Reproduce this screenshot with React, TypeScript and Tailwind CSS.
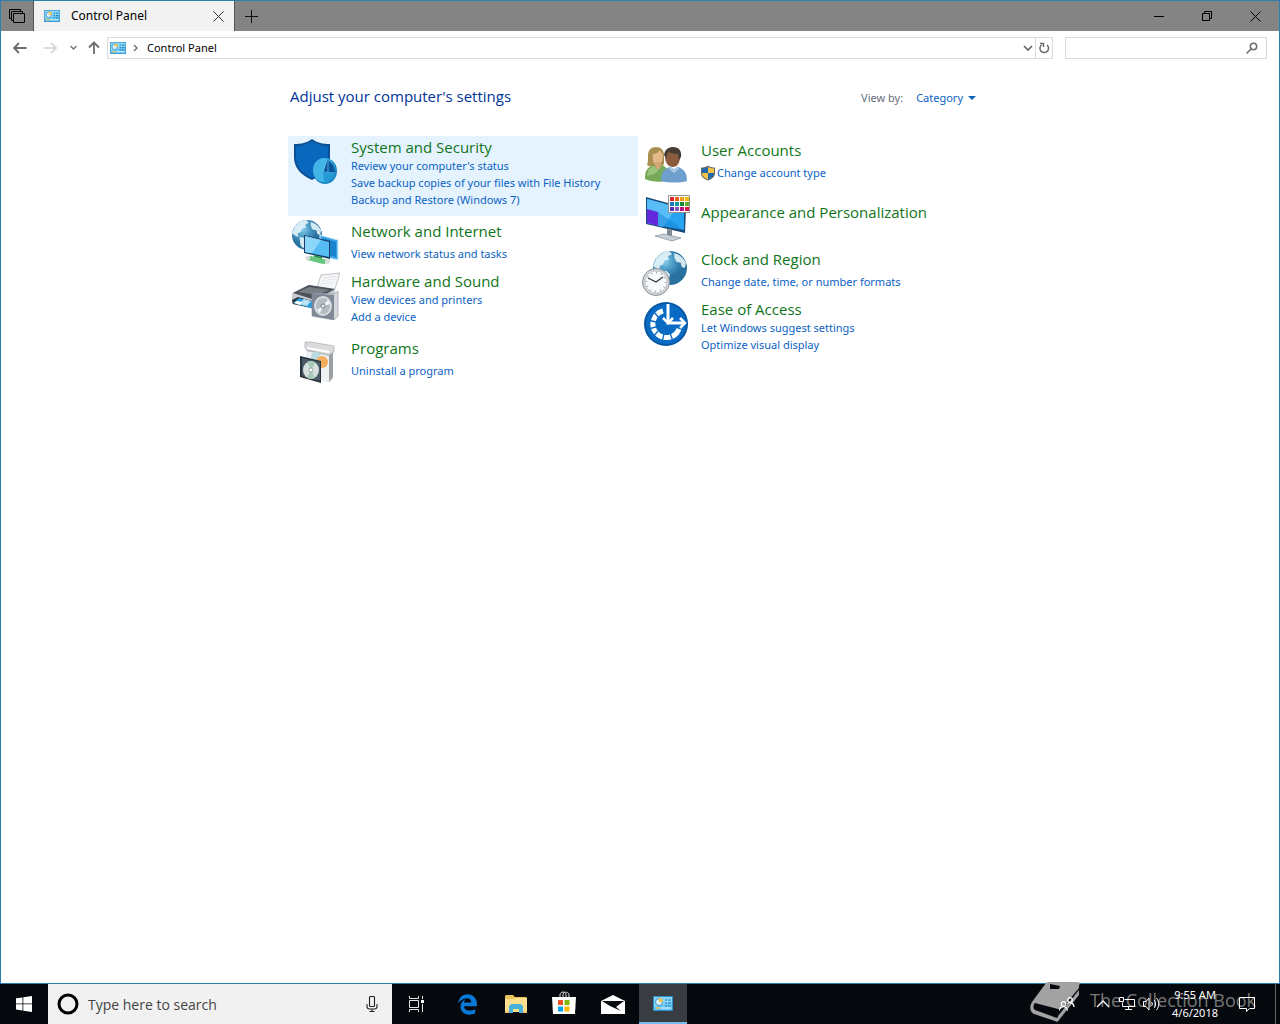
import type { ReactNode } from "react";
import { FaEdgeLegacy } from "react-icons/fa6";

const ControlPanelIcon = ({ className }: { className?: string }) => (
  <svg className={className} viewBox="0 0 20 15" aria-hidden="true">
    <rect x="0.5" y="0.5" width="19" height="14" fill="#6ac6f3" stroke="#2b8fcb" />
    <path d="M1 1h18v5L1 11z" fill="#8ad6f8" />
    <circle cx="6" cy="6" r="3.500" fill="#d9f1fc" stroke="#3285b8" strokeWidth="0.9" />
    <path d="M6 6V2a4 4 0 0 1 4 4z" fill="#f3c14a" />
    <path d="M12 4h2M15 4h3M12 7h2M15 7h3M12 10h2M15 10h3" stroke="#1a79bb" strokeWidth="1.2" />
    <path d="M3 12h4" stroke="#f3c14a" strokeWidth="1.5" />
    <path d="M8 12h10" stroke="#e7f7ff" />
  </svg>
);

const Globe = ({ cx, cy, r }: { cx: number; cy: number; r: number }) => (
  <g transform={`translate(${cx} ${cy}) scale(${r / 16})`}>
    <circle r="16" fill="url(#globe)" />
    <path d="M-13-9c3-4 8-7 12-7l3 3-4 2 1 3-4 1-2 4-3 1 1 4-3-1-4-3zM-8 2l5 1 3 3-1 4-3 4-3-3zM4-14c5 1 9 5 11 9l-1 5-3-1-1-4-4-1-2-4z" fill="#e6f4fa" opacity="0.9" />
  </g>
);

const SecurityIcon = () => (
  <>
    <path d="M20 1c5 4 11 5 18 5v13c0 11-7 18-18 23C9 37 2 30 2 19V6c7 0 13-1 18-5z" fill="#0a4f94" />
    <path d="M20 3c5 3 10 5 16 5v11c0 10-6 16-16 21C10 35 4 29 4 19V8c6 0 11-2 16-5z" fill="#0968bd" />
    <ellipse cx="33" cy="33" rx="12" ry="13" fill="#1b86c6" />
    <ellipse cx="32" cy="32" rx="11" ry="12" fill="#42b4e6" />
    <path d="M31 34l4-12c5 2 8 6 8 13z" fill="#0b559c" />
    <path d="M31 34l4-12M36 35V23M31 34l12 1" stroke="#6fd0f5" strokeWidth="0.7" />
    <path d="M31 34l12 1c-1 6-5 9-11 9z" fill="#2499d3" />
  </>
);

const NetworkIcon = () => (
  <>
    <Globe cx={15} cy={17} r={15} />
    <path d="M28 17l18 5v20l-18-4z" fill="#3aa6e8" stroke="#d9eefa" />
    <path d="M31 20l13 4v15l-13-3z" fill="#1883cf" />
    <path d="M12 17l26 6v18l-26-6z" fill="#183e63" />
    <path d="M13 18l24 6v15l-24-5z" fill="#56bdf4" />
    <path d="M13 18l16 4-9 13-7-1z" fill="#8bd7fb" />
    <path d="M22 37l8 2v4h-8z" fill="#25934a" />
    <path d="M14 39l5-1 17 4v3l-5 1-16-4z" fill="#68c77e" />
    <path d="M13 39l5-1v4l-4-1zM33 42l5-1v4l-5 1z" fill="#d8dcda" />
  </>
);

const HardwareIcon = () => (
  <>
    <path d="M29 3l19-2-6 19-18-2z" fill="#f4f5f6" stroke="#a9adb2" strokeWidth="0.7" />
    <path d="M31 6l13-2M30 9l13-2M29 12l12-1" stroke="#dfe3e7" strokeWidth="0.7" />
    <path d="M0 21l16-8 27 4v14l-22 6-21-5z" fill="#c7ccd2" />
    <path d="M1 21l16-8 26 4-20 11z" fill="#4b5157" />
    <path d="M6 20l11-5 21 3-13 5z" fill="#787e85" />
    <path d="M0 28l6-3 18 5-3 6-20-4z" fill="#2b3137" />
    <path d="M1 31l6-5 16 4-4 6z" fill="#2a9cdd" />
    <path d="M7 32l5-5 7 2-4 5z" fill="#b9e3f4" />
    <path d="M2 31l3-2 5 1-2 3z" fill="#fff" />
    <path d="M20 21l22 1 4-3v25l-4 4-22-4z" fill="#d5d9de" stroke="#8b929a" strokeWidth="0.6" />
    <path d="M20 21l22 2v25l-22-4z" fill="#7f8995" />
    <ellipse cx="31" cy="34" rx="9" ry="10" fill="#d9dde1" />
    <ellipse cx="31" cy="34" rx="7" ry="8" fill="#b4bcc4" />
    <path d="M31 34l5-6 2 4zM31 34l-6 4 3 3z" fill="#f5f6f7" />
    <ellipse cx="31" cy="34" rx="2" ry="2" fill="#eef1f3" stroke="#606c78" strokeWidth="0.8" />
  </>
);

const ProgramsIcon = () => (
  <>
    <path d="M14 12l4-9 23 5v31l-4 4-23-6z" fill="#bfc2c5" />
    <path d="M14 12l23 5v26l-23-6z" fill="#f0f1f2" />
    <path d="M37 17l4-5v26l-4 5z" fill="#9ba0a4" />
    <path d="M13 3h6l23 4v6l-5 3-22-5-2-2z" fill="#d9dbdd" stroke="#a6aaad" strokeWidth="0.7" />
    <path d="M15 9l22 4" stroke="#fff" strokeWidth="2" />
    <circle cx="24" cy="18" r="5" fill="#b9dbe1" />
    <circle cx="30" cy="23" r="6" fill="#f3ad5c" />
    <path d="M8 17l21 5v22l-21-6z" fill="#26323e" />
    <path d="M10 19l18 4v19l-18-5z" fill="#4b5a65" />
    <ellipse cx="19" cy="31" rx="8" ry="9" fill="#d8e0df" />
    <path d="M19 31l-4-8c3-2 6-1 8 1zM19 31l4 8c-3 2-6 1-8-1z" fill="#a7cbb9" />
    <ellipse cx="19" cy="31" rx="2" ry="2" fill="#fff" stroke="#7b8b91" strokeWidth="0.7" />
  </>
);

const UsersIcon = () => (
  <>
    <path d="M6 16c0-6 3-9 8-9 5 0 8 3 8 8v9c-3 4-13 4-17 1 1-3 1-5 1-9z" fill="#a9904f" />
    <path d="M11 14c3 0 6-2 7-4l3 5c0 6-2 9-6 10-4-1-5-6-4-11z" fill="#e3b98c" />
    <path d="M13 22h6v5l-3 3-3-3z" fill="#d5a678" />
    <path d="M3 39c0-8 2-12 9-14l4 5 4-5c5 2 7 6 7 15-8 3-17 2-24-1z" fill="#78a957" />
    <path d="M5 36c1-6 3-9 7-10l4 5-4 3z" fill="#9bc47b" />
    <path d="M23 17c0-6 3-9 8-9s8 4 7 9c0 6-3 10-7 10-5 0-8-5-8-10z" fill="#8b5b3d" />
    <path d="M22 15c1-6 5-8 9-8 6 0 9 4 8 10l-2 3-1-6c-5 0-7-1-10-2l-2 6z" fill="#463c34" />
    <path d="M19 41c0-8 2-12 9-14l4 4 4-4c6 2 9 6 9 14-7 2-18 2-26 0z" fill="#6e9fcd" />
    <path d="M28 26l4 3 4-3 1 3-5 4-5-4z" fill="#a7c9e8" />
  </>
);

const swatches = ["#e0262d", "#e5601b", "#f39b13", "#efb700", "#147ac2", "#0899a5", "#118a36", "#5daa24", "#5431b5", "#8556b8", "#b91582", "#dd1443"];

const AppearanceIcon = () => (
  <>
    <path d="M4 3l40 11-1 25-39-9z" fill="#174a76" />
    <path d="M5 5l37 10v21L5 29z" fill="#27a4f0" />
    <path d="M5 5l30 8-14 20-16-4z" fill="#58bdf7" />
    <path d="M5 15l11 3v14L5 29z" fill="#6329df" />
    <path d="M16 18l26 18-26-4z" fill="#1685d8" opacity="0.5" />
    <path d="M25 35l5 1v6h-5z" fill="#7e8a94" />
    <path d="M13 42l9-2 17 4-9 3z" fill="#c7d0d7" stroke="#73818c" strokeWidth="0.6" />
    <path d="M26.500 1.500h21v17h-21z" fill="#fff" stroke="#929292" />
    {swatches.map((color, i) => (
      <rect key={color} x={28 + (i % 4) * 5} y={3 + Math.floor(i / 4) * 5} width="4" height="4" fill={color} />
    ))}
  </>
);

const ClockIcon = () => (
  <>
    <Globe cx={28} cy={19} r={17} />
    <circle cx="14" cy="33" r="13.500" fill="#cfd4d8" stroke="#8b9298" />
    <circle cx="14" cy="33" r="11" fill="#f9fafb" stroke="#b7bdc2" strokeWidth="0.700" />
    <circle cx="14" cy="33" r="9.500" fill="none" stroke="#70777c" strokeWidth="1.500" strokeDasharray="0.7 4.274" />
    <path d="M6 29l8 4 7-5" fill="none" stroke="#33383c" strokeWidth="1.300" />
  </>
);

const EaseIcon = () => (
  <>
    <circle cx="24" cy="24" r="22" fill="#0757a4" />
    <circle cx="24" cy="24" r="20" fill="#0a6bc4" />
    <path d="M21 11A13.500 13.500 0 1 0 37 29" fill="none" stroke="#fff" strokeWidth="5" />
    <path d="M12 12l5 6M6 20l8 2M6 29l8-2M11 37l5-6M20 42l2-8M31 41l-3-8" stroke="#0a6bc4" strokeWidth="1.300" />
    <path d="M26 4v19h17" fill="none" stroke="#fff" strokeWidth="3" />
    <path d="M21 18l5 5 5-5M38 18l5 5-5 5" fill="none" stroke="#fff" strokeWidth="2.500" />
  </>
);

const UacShield = () => (
  <svg className="-ml-px mr-px size-4 shrink-0" viewBox="0 0 16 16" aria-hidden="true">
    <path d="M8 0.500c2 1.500 4 2 7 2V8c0 4-3 6-7 7.500C4 14 1 12 1 8V2.500c3 0 5-.5 7-2z" fill="#6b6c68" />
    <path d="M8 2v6H2V3.500c2 0 4-.5 6-1.500zM8 8h6c0 3-2 5-6 6.500z" fill="#1f68ad" />
    <path d="M8 2c2 1 4 1.500 6 1.500V8H8zM2 8h6v6.500C4 13 2 11 2 8z" fill="#f5c445" />
  </svg>
);

type Category = {
  title: string;
  icon: ReactNode;
  links: string[];
  row: string;
  text: string;
  shield?: boolean;
};

const left: Category[] = [
  {
    title: "System and Security",
    icon: <SecurityIcon />,
    links: ["Review your computer's status", "Save backup copies of your files with File History", "Backup and Restore (Windows 7)"],
    row: "min-h-20 pt-px bg-[#e5f3ff]",
    text: "",
  },
  { title: "Network and Internet", icon: <NetworkIcon />, links: ["View network status and tasks"], row: "min-h-[50px] pt-px", text: "pt-1" },
  { title: "Hardware and Sound", icon: <HardwareIcon />, links: ["View devices and printers", "Add a device"], row: "min-h-[67px] pt-[5px]", text: "" },
  { title: "Programs", icon: <ProgramsIcon />, links: ["Uninstall a program"], row: "min-h-[52px] pt-[5px]", text: "" },
];

const right: Category[] = [
  { title: "User Accounts", icon: <UsersIcon />, links: ["Change account type"], row: "min-h-[57px] pt-[3px]", text: "pt-px", shield: true },
  { title: "Appearance and Personalization", icon: <AppearanceIcon />, links: [], row: "min-h-[52px]", text: "pt-[9px]" },
  { title: "Clock and Region", icon: <ClockIcon />, links: ["Change date, time, or number formats"], row: "min-h-[50px] pt-[3px]", text: "pt-px" },
  { title: "Ease of Access", icon: <EaseIcon />, links: ["Let Windows suggest settings", "Optimize visual display"], row: "min-h-[67px] pt-1", text: "" },
];

const CategoryRow = ({ category }: { category: Category }) => (
  <li className={`flex items-start gap-[11px] pl-1 ${category.row}`}>
    <svg className="mt-px -mb-2 size-12 shrink-0" viewBox="0 0 48 48" aria-hidden="true">
      {category.icon}
    </svg>
    <div className={`min-w-0 ${category.text}`}>
      <h2 className="text-[15px] leading-5">
        <a href="#" className="text-[#10751a]">{category.title}</a>
      </h2>
      <ul className={category.links.length === 1 ? "pt-1" : ""}>
        {category.links.map((link) => (
          <li key={link} className="font-['Noto_Sans',sans-serif] text-[11px] leading-[17px]">
            <a href="#" className="flex items-center text-[#0b62c4]">
              {category.shield && <UacShield />}
              {link}
            </a>
          </li>
        ))}
      </ul>
    </div>
  </li>
);

const TitleBar = () => (
  <header className="flex h-[30px] bg-[#848484]">
    <button aria-label="Show sets" className="flex w-8 items-center justify-center">
      <svg className="size-4" viewBox="0 0 16 16" fill="none" stroke="#000">
        <path d="M4.500 5.500h11v9h-11zM2.500 12.500v-9h11v2M4.500 12.500h-2M0.500 10.500v-9h11v2M2.500 10.500h-2" />
      </svg>
    </button>
    <div className="flex w-[202px] items-center border-x border-[#555] bg-[#f2f2f2] pr-2 pl-[10px]">
      <ControlPanelIcon className="h-3 w-4" />
      <span className="ml-[11px] flex-1 font-['Noto_Sans',sans-serif] text-[12px] text-black">Control Panel</span>
      <button aria-label="Close tab" className="flex size-4 items-center justify-center">
        <svg className="size-[11px]" viewBox="0 0 11 11" stroke="#333">
          <path d="M0.500 0.500l10 10M10.500 0.500l-10 10" />
        </svg>
      </button>
    </div>
    <button aria-label="New tab" className="flex w-8 items-center justify-center">
      <svg className="size-[13px]" viewBox="0 0 13 13" stroke="#111">
        <path d="M6.500 0v13M0 6.500h13" />
      </svg>
    </button>
    <div className="ml-auto flex">
      <button aria-label="Minimize" className="flex w-12 items-center justify-center">
        <svg className="h-[11px] w-[10px]" viewBox="0 0 10 11" stroke="#000"><path d="M0 5.500h10" /></svg>
      </button>
      <button aria-label="Restore" className="flex w-12 items-center justify-center">
        <svg className="size-[10px]" viewBox="0 0 10 10" fill="none" stroke="#000"><path d="M0.500 2.500h7v7h-7zM2.500 2.500v-2h7v7h-2" /></svg>
      </button>
      <button aria-label="Close" className="flex w-12 items-center justify-center">
        <svg className="size-[11px]" viewBox="0 0 11 11" stroke="#000"><path d="M0.500 0.500l10 10M10.500 0.500l-10 10" /></svg>
      </button>
    </div>
  </header>
);

const AddressBar = () => (
  <nav className="flex h-[34px] items-center px-3">
    <button aria-label="Back" className="mr-4">
      <svg className="h-3 w-[14px]" viewBox="0 0 14 12" fill="none" stroke="#6c6c6c" strokeWidth="1.800"><path d="M1 6h12.500M6 1L1 6l5 5" /></svg>
    </button>
    <button aria-label="Forward" disabled className="mr-[13px]">
      <svg className="h-3 w-[14px]" viewBox="0 0 14 12" fill="none" stroke="#d4d4d4" strokeWidth="1.600"><path d="M0.500 6H13M8 1l5 5-5 5" /></svg>
    </button>
    <button aria-label="Recent locations" className="mr-[11px]">
      <svg className="h-2 w-[7px]" viewBox="0 0 7 8" fill="none" stroke="#777" strokeWidth="1.500"><path d="M0.500 2l3 3 3-3" /></svg>
    </button>
    <button aria-label="Up" className="mr-[7px]">
      <svg className="h-[14px] w-3" viewBox="0 0 12 14" fill="none" stroke="#6c6c6c" strokeWidth="1.800"><path d="M6 1.500V13M1 6.500l5-5 5 5" /></svg>
    </button>
    <div className="flex h-[22px] flex-1 items-center border border-[#d9d9d9] pl-[2px]">
      <ControlPanelIcon className="h-3 w-4" />
      <svg className="ml-[7px] h-2 w-[5px]" viewBox="0 0 5 8" fill="none" stroke="#666" strokeWidth="1.300"><path d="M1 1l3 3-3 3" /></svg>
      <a href="#" className="ml-[9px] flex-1 font-['Noto_Sans',sans-serif] text-[11px] text-black">Control Panel</a>
      <button aria-label="Previous locations" className="mr-[2px]">
        <svg className="h-2 w-[10px]" viewBox="0 0 10 8" fill="none" stroke="#666" strokeWidth="1.700"><path d="M1 2l4 4 4-4" /></svg>
      </button>
      <button aria-label="Refresh" className="flex h-5 w-[17px] items-center justify-center border-l border-[#d9d9d9]">
        <svg className="size-3" viewBox="0 0 12 12" fill="none" stroke="#6c6c6c" strokeWidth="1.500"><path d="M9 3a4.300 4.300 0 1 1-5.500 0M2 1.500h3.500V5" /></svg>
      </button>
    </div>
    <label className="ml-3 flex h-[22px] w-[202px] items-center border border-[#d9d9d9] pr-2">
      <input aria-label="Search Control Panel" className="min-w-0 flex-1 px-2 text-[12px] outline-none" />
      <svg className="size-3" viewBox="0 0 12 12" fill="none" stroke="#6c6c6c" strokeWidth="1.500"><circle cx="7.500" cy="4.500" r="3.200" /><path d="M5 7L0.500 11.500" /></svg>
    </label>
  </nav>
);

const Taskbar = () => (
  <footer className="relative flex h-10 bg-[#05080d] text-white">
    <button aria-label="Start" className="flex w-12 items-center justify-center">
      <svg className="size-4" viewBox="0 0 16 16" fill="#fff"><path d="M0 2.300l6.500-.9v6.100H0zM7.300 1.300L16 0v7.500H7.300zM0 8.300h6.500v6.200L0 13.600zM7.300 8.300H16V16l-8.700-1.300z" /></svg>
    </button>
    <label className="flex w-[344px] items-center bg-[#f1f1f1] pr-[14px] pl-[9px]">
      <svg className="size-[22px]" viewBox="0 0 22 22" fill="none"><circle cx="11" cy="11" r="9" stroke="#000" strokeWidth="3" /></svg>
      <input aria-label="Search" placeholder="Type here to search" className="ml-[9px] min-w-0 flex-1 text-[14px] outline-none placeholder:text-[#444]" />
      <svg className="h-4 w-3" viewBox="0 0 12 16" fill="none" stroke="#222" strokeWidth="1.100"><rect x="3.500" y="0.500" width="5" height="10" rx="1" /><path d="M1 8v2.500c0 1.500 1 2.500 2.500 2.500h5c1.500 0 2.500-1 2.500-2.500V8M6 13v2.500M3.500 15.500h5" /></svg>
    </label>
    <button aria-label="Task View" className="flex w-12 items-center justify-center">
      <svg className="h-4 w-[17px]" viewBox="0 0 17 16" fill="none" stroke="#e6e6e6"><path d="M1.500 4.500h9v7h-9zM1.500 0v2.500h9V0M1.500 16v-2.500h9V16M14.500 0v3M14.500 8v8" /><path d="M13 4h3v3h-3z" fill="#fff" stroke="none" /></svg>
    </button>
    <button aria-label="Microsoft Edge" className="ml-[3px] flex w-12 items-center justify-center">
      <FaEdgeLegacy className="size-[21px] text-[#0878d7]" />
    </button>
    <button aria-label="File Explorer" className="ml-px flex w-12 items-center justify-center">
      <svg className="h-[18px] w-[22px]" viewBox="0 0 22 18"><path d="M0 1l1-1h7l2 2h11l1 1v14H0z" fill="#eac45d" /><path d="M1 4h8l2-1h11v14H0V5z" fill="#fbe08d" /><path d="M4 18v-7l2-2h10l2 2v7h-4v-4H8v4z" fill="#4ab1df" /><path d="M0 16h4v2H0zM18 16h4v2h-4z" fill="#edc665" /></svg>
    </button>
    <button aria-label="Microsoft Store" className="flex w-12 items-center justify-center">
      <svg className="-mt-1 h-[23px] w-6" viewBox="0 0 24 23"><path d="M8 6V4c0-4 6-4 6 0v2M11 6V3c1-3 6-2 6 1v2" fill="none" stroke="#ddd" /><path d="M0 6h24l-1 17H1z" fill="#fff" /><path d="M6 9h5v5H6z" fill="#ef5125" /><path d="M12.500 9h5v5h-5z" fill="#7eb900" /><path d="M6 15.500h5v5H6z" fill="#00a3ee" /><path d="M12.500 15.500h5v5h-5z" fill="#ffb800" /></svg>
    </button>
    <button aria-label="Mail" className="ml-px flex w-12 items-center justify-center">
      <svg className="h-[19px] w-6" viewBox="0 0 24 19"><path d="M0 6l12-6 12 6v13H0z" fill="#fff" /><path d="M1 6h22l-8 6 5 4L9 11z" fill="#080b10" /></svg>
    </button>
    <button aria-label="Control Panel" className="ml-[2px] flex w-12 items-center justify-center border-b-2 border-[#76b9ed] bg-[#393c40]">
      <ControlPanelIcon className="h-[15px] w-5" />
    </button>

    {/* Watermark behind the tray */}
    <svg className="absolute right-[200px] bottom-[2px] h-10 w-[50px]" viewBox="0 0 50 40" aria-hidden="true">
      <path d="M16 1C17 0 18 0 20 0h28c2 0 2 2 1 4v9L29 38c-1 2-2 2-4 1L4 32C0 30-1 25 2 20z" fill="#a2a2a2" />
      <path d="M5 21c-2 2-2 6 0 7l22 8 2-2 20-25V6L33 25c-1 2-3 2-5 2z" fill="#05080d" />
      <path d="M28 34L49 8v3L29 36z" fill="#a2a2a2" />
      <path d="M20 2l10 2-1 3h-9z" fill="#05080d" />
    </svg>
    <span className="absolute right-6 bottom-3 text-[18px] leading-6 whitespace-nowrap text-[#777]">The Collection Book</span>

    <div className="relative ml-auto flex items-center">
      <button aria-label="People" className="mr-[21px]">
        <svg className="size-4" viewBox="0 0 16 16" fill="none" stroke="#fff" strokeWidth="1.200"><circle cx="11" cy="4" r="2.300" /><circle cx="4.500" cy="8" r="2.300" /><path d="M0.500 14.500c0-5 7-5 8 0M8 8c2-3 7-1 7 3" /></svg>
      </button>
      <button aria-label="Show hidden icons" className="mr-[9px]">
        <svg className="h-2 w-[14px]" viewBox="0 0 14 8" fill="none" stroke="#fff" strokeWidth="1.300"><path d="M1 7l6-6 6 6" /></svg>
      </button>
      <button aria-label="Network" className="mr-2">
        <svg className="h-[14px] w-4" viewBox="0 0 16 14" fill="none" stroke="#fff"><path d="M5.500 2.500h10v7h-12v-4M9.500 9.500v3M6 12.500h7M0.500 0.500h4v4h-4z" /></svg>
      </button>
      <button aria-label="Volume" className="mr-3">
        <svg className="h-[14px] w-[17px]" viewBox="0 0 17 14" fill="none" stroke="#fff"><path d="M0.500 4.500H3l3-3.500v12L3 9.500H0.500zM8.500 5c1 1 1 3 0 4M11 3c2 2 2 6 0 8M13.500 1c3 4 3 8 0 12" /></svg>
      </button>
      <div className="mr-[21px] text-center font-['Noto_Sans',sans-serif] text-[11px] leading-[18px]">
        <div>9:55 AM</div>
        <div>4/6/2018</div>
      </div>
      <button aria-label="Notifications" className="mr-5">
        <svg className="size-4" viewBox="0 0 16 16" fill="none" stroke="#fff"><path d="M0.500 1.500h15v11h-5l-3 3v-3h-7z" /></svg>
      </button>
      <button aria-label="Show desktop" className="h-10 w-[5px] border-l border-[#666]" />
    </div>
  </footer>
);

const App = () => {
  return (
    <div className="flex min-h-screen flex-col bg-white font-['Open_Sans',sans-serif]">
      <svg className="absolute size-0" aria-hidden="true">
        <defs>
          <radialGradient id="globe" cx="0.350" cy="0.300">
            <stop offset="0" stopColor="#8bd0ef" />
            <stop offset="0.500" stopColor="#4c9bc5" />
            <stop offset="1" stopColor="#2870a0" />
          </radialGradient>
        </defs>
      </svg>
      <div className="flex flex-1 flex-col border border-[#2f7fae]">
        <TitleBar />
        <AddressBar />
        <div className="pr-1">
          <main className="mx-auto w-full max-w-[700px] pt-[19px]">
            <div className="flex items-end justify-between pr-3 pl-[2px]">
              <h1 className="text-[15px] leading-6 text-[#003399]">Adjust your computer's settings</h1>
              <div className="flex items-center font-['Noto_Sans',sans-serif] text-[11px] leading-5">
                <span className="mr-[13px] text-[#666f7c]">View by:</span>
                <button className="flex items-center text-[#0b62c4]">
                  Category
                  <svg className="ml-[5px] h-1 w-2" viewBox="0 0 8 4" fill="#0b62b4"><path d="M0 0h8L4 4z" /></svg>
                </button>
              </div>
            </div>
            <div className="grid grid-cols-2 pt-7">
              <ul>
                {left.map((category) => <CategoryRow key={category.title} category={category} />)}
              </ul>
              <ul>
                {right.map((category) => <CategoryRow key={category.title} category={category} />)}
              </ul>
            </div>
          </main>
        </div>
      </div>
      <Taskbar />
    </div>
  );
};

export default App;
